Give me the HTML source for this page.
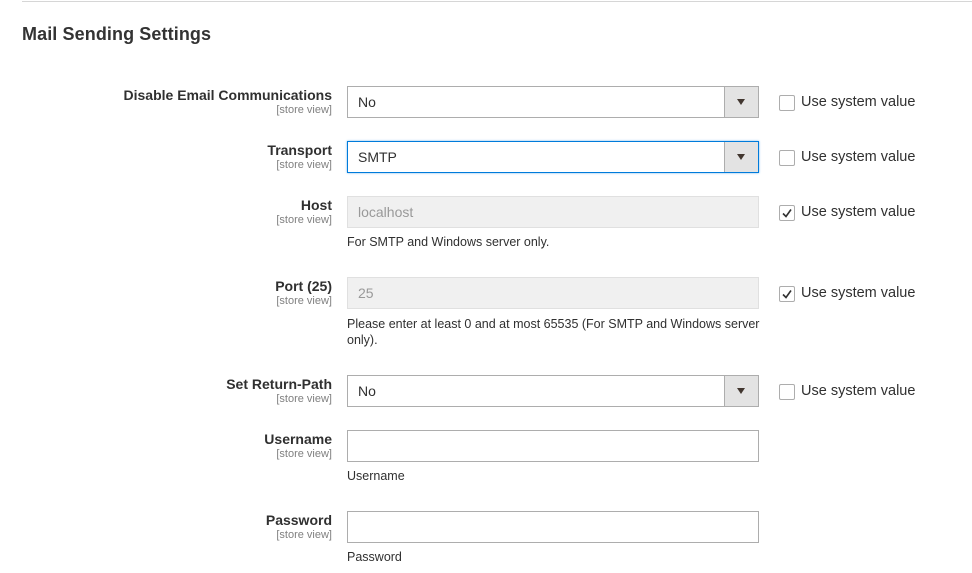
<!DOCTYPE html><html><head><style>
body{margin:0;width:972px;height:573px;background:#fff;font-family:"Liberation Sans",sans-serif;color:#303030;position:relative;overflow:hidden}
.a{position:absolute}
.line{left:22px;top:1px;width:950px;height:1px;background:#d6d6d6}
h1{position:absolute;left:22px;top:24px;margin:0;font-size:18px;font-weight:bold;color:#333;letter-spacing:0.1px}
.lbl{position:absolute;right:640px;text-align:right;font-weight:bold;font-size:14px;color:#303030;line-height:16px}
.lbl span{display:block;font-weight:normal;font-size:11px;color:#808080;line-height:14px}
.in{position:absolute;left:347px;width:410px;height:30px;border:1px solid #adadad;background:#fff;font-size:14px;line-height:30px;box-sizing:content-box}
.in .t{position:absolute;left:10px;top:0}
.in.dis{background:#f0f0f0;border-color:#e0e0e0;color:#999}
.in.foc{border-color:#007bdb;box-shadow:0 0 2px #6fb3e8}
.arr{position:absolute;right:0;top:0;width:33px;height:30px;background:#e3e3e3;border-left:1px solid #adadad}
.arr:after{content:"";position:absolute;left:12px;top:12px;border-left:4px solid transparent;border-right:4px solid transparent;border-top:6px solid #41362f}
.cb{position:absolute;left:779px;width:14px;height:14px;border:1px solid #adadad;border-radius:2px;background:#fff}
.cbl{position:absolute;left:801px;font-size:14.5px;color:#303030}
.note{position:absolute;left:347px;font-size:12.5px;color:#303030;line-height:16px;width:420px}
</style></head><body>
<div class="a line"></div>
<h1>Mail Sending Settings</h1>

<div class="lbl" style="top:87px">Disable Email Communications<span>[store view]</span></div>
<div class="in" style="top:86px"><span class="t">No</span><div class="arr"></div></div>
<div class="cb" style="top:95px"></div><div class="cbl" style="top:94px">Use system value</div>

<div class="lbl" style="top:142px">Transport<span>[store view]</span></div>
<div class="in foc" style="top:141px"><span class="t">SMTP</span><div class="arr"></div></div>
<div class="cb" style="top:150px"></div><div class="cbl" style="top:149px">Use system value</div>

<div class="lbl" style="top:197px">Host<span>[store view]</span></div>
<div class="in dis" style="top:196px"><span class="t">localhost</span></div>
<div class="cb" style="top:205px"><svg width="14" height="14" style="position:absolute;left:0;top:0"><path d="M3 7.5l3 3 5-7" fill="none" stroke="#303030" stroke-width="1.6"/></svg></div><div class="cbl" style="top:204px">Use system value</div>
<div class="note" style="top:234px">For SMTP and Windows server only.</div>

<div class="lbl" style="top:278px">Port (25)<span>[store view]</span></div>
<div class="in dis" style="top:277px"><span class="t">25</span></div>
<div class="cb" style="top:286px"><svg width="14" height="14" style="position:absolute;left:0;top:0"><path d="M3 7.5l3 3 5-7" fill="none" stroke="#303030" stroke-width="1.6"/></svg></div><div class="cbl" style="top:285px">Use system value</div>
<div class="note" style="top:316px">Please enter at least 0 and at most 65535 (For SMTP and Windows server only).</div>

<div class="lbl" style="top:376px">Set Return-Path<span>[store view]</span></div>
<div class="in" style="top:375px"><span class="t">No</span><div class="arr"></div></div>
<div class="cb" style="top:384px"></div><div class="cbl" style="top:383px">Use system value</div>

<div class="lbl" style="top:431px">Username<span>[store view]</span></div>
<div class="in" style="top:430px"></div>
<div class="note" style="top:468px">Username</div>

<div class="lbl" style="top:512px">Password<span>[store view]</span></div>
<div class="in" style="top:511px"></div>
<div class="note" style="top:549px">Password</div>
</body></html>
